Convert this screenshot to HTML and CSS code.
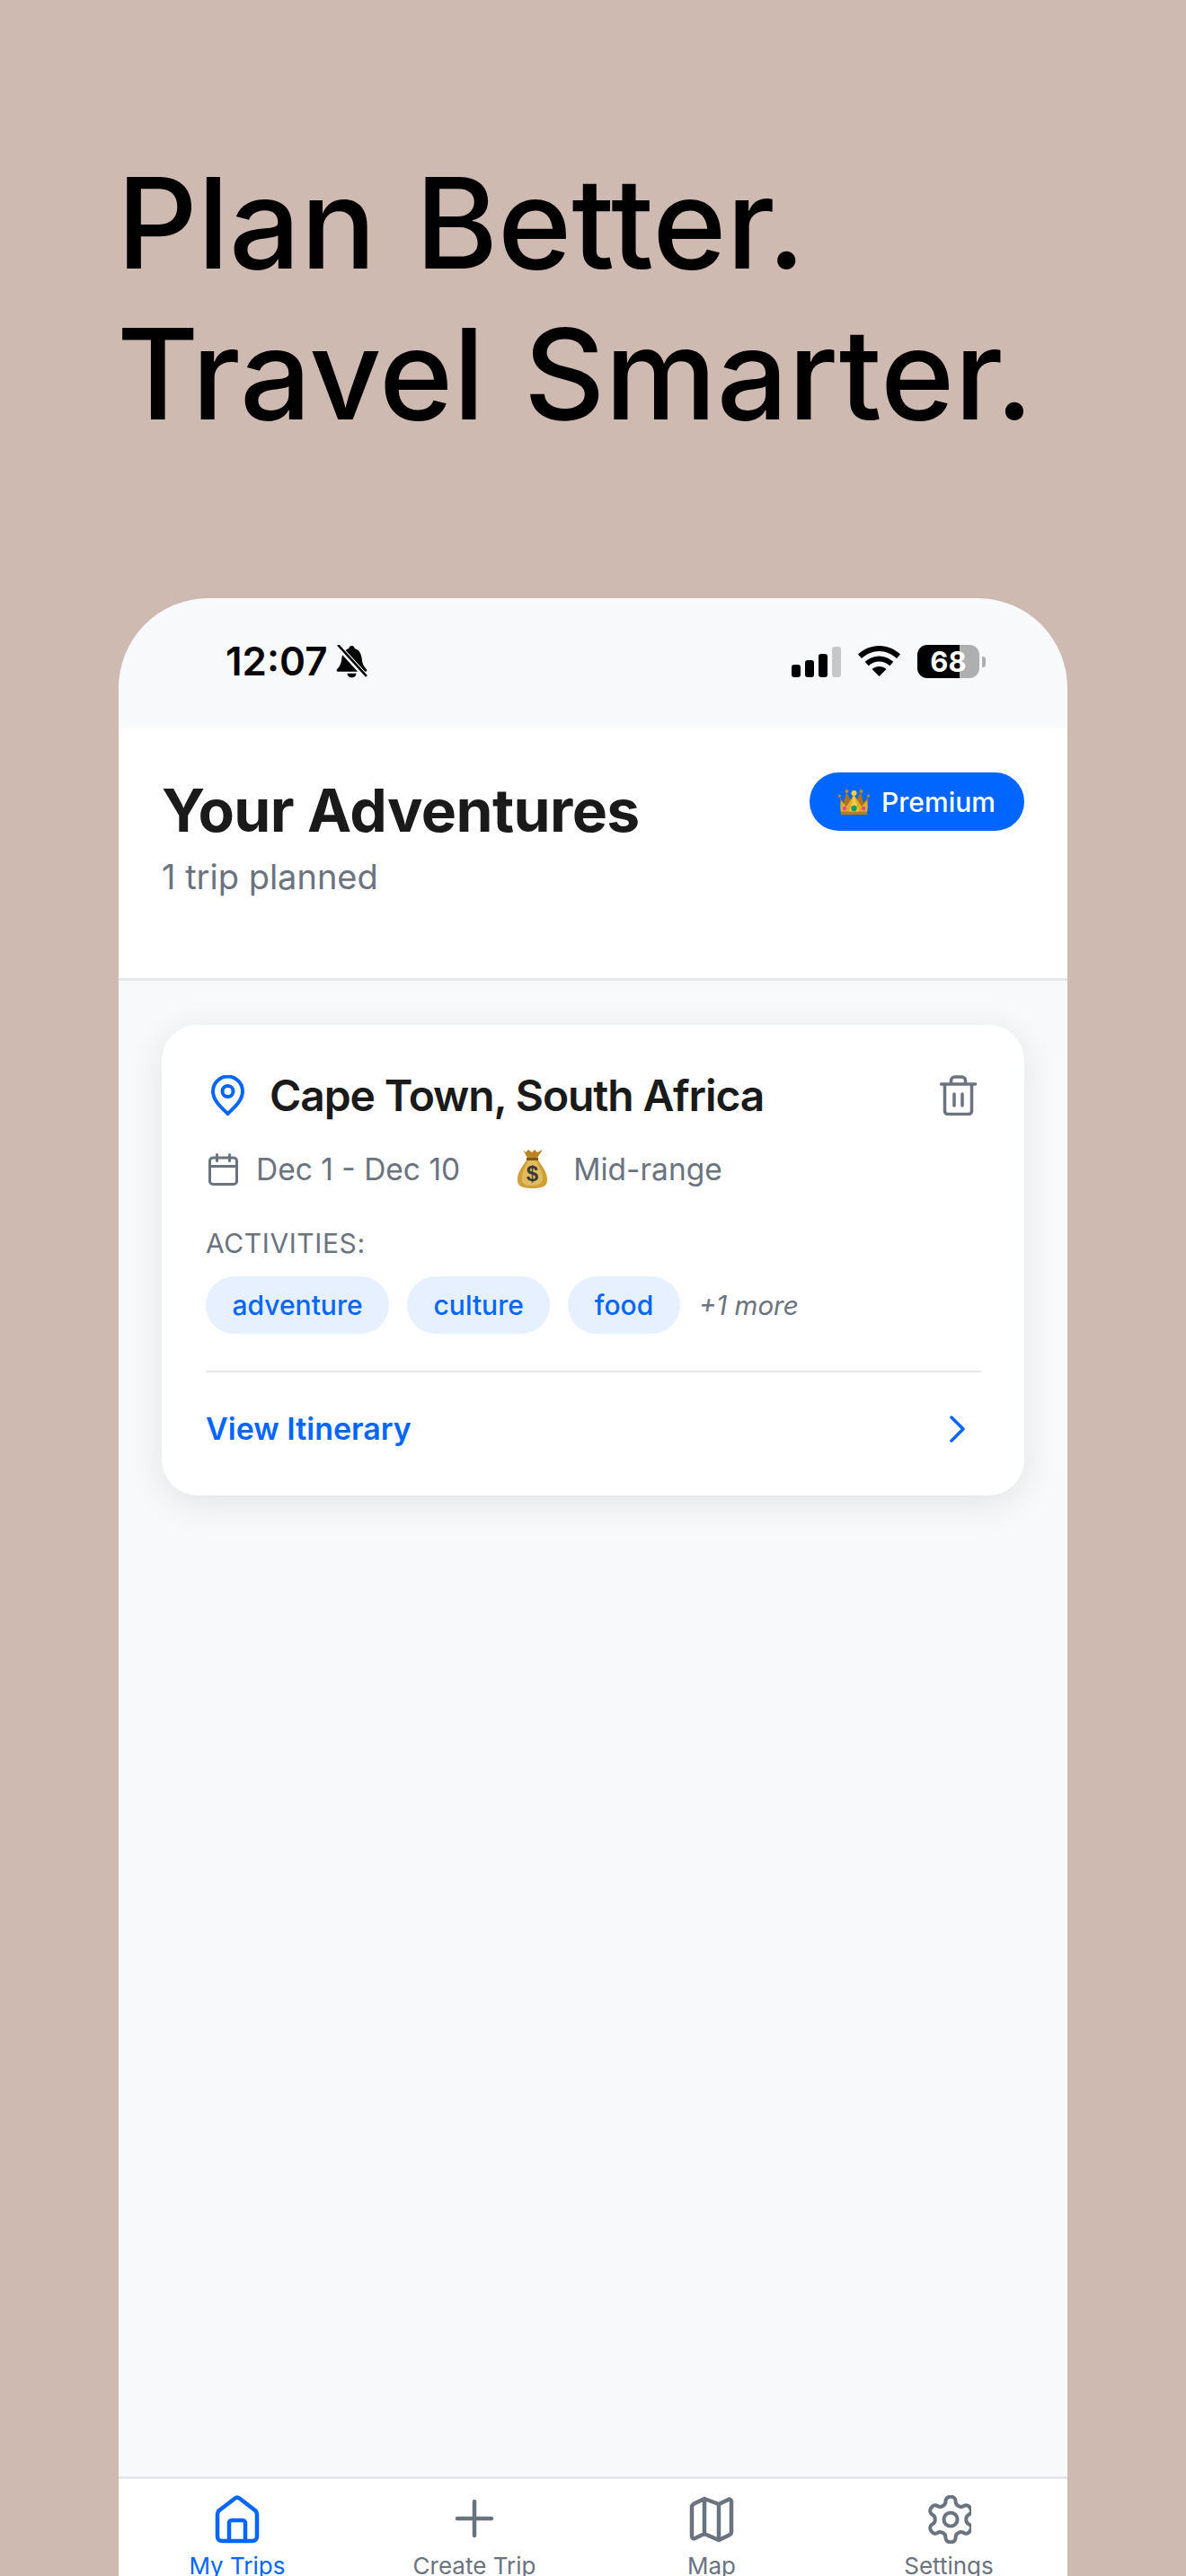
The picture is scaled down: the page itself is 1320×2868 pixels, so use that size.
FILE: index.html
```html
<!DOCTYPE html>
<html lang="en">

<head>
    <meta charset="UTF-8">
    <meta name="viewport" content="width=device-width, initial-scale=1.0">
    <title>Your Adventures</title>
    <link rel="stylesheet" href="styles.css">
</head>

<body>
    <h1 class="hero">Plan Better.<br>Travel Smarter.</h1>

    <div class="phone">
        <!-- Status Bar -->
        <div class="status-bar">
            <div class="status-left">
                <span class="clock">12:07</span>
                <svg class="bell" viewBox="0 0 36 36">
                    <path d="M18 1c-1.800 0-2.900 1.200-3.100 2.800C9.500 5.500 7.500 10 7 15.500c-.4 4.500-1.800 7.500-5 11-.9 1-.3 2.500 1 2.500h30c1.300 0 1.900-1.500 1-2.500-3.200-3.500-4.600-6.500-5-11-.5-5.500-2.500-10-7.900-11.700C20.900 2.200 19.800 1 18 1z" />
                    <path d="M13 31h10c-.4 2.800-2.400 4.500-5 4.500s-4.600-1.700-5-4.500z" />
                    <path class="bell-cut" d="M2 0l32 35" />
                    <path class="bell-slash" d="M3 0l31 34" />
                </svg>
            </div>
            <div class="status-right">
                <div class="signal">
                    <span class="bar bar-1"></span>
                    <span class="bar bar-2"></span>
                    <span class="bar bar-3"></span>
                    <span class="bar bar-4"></span>
                </div>
                <svg class="wifi" viewBox="0 0 47 34">
                    <path d="M23.500 0C14.500 0 6.500 3.500 0 9.500l4 4.500C9.500 9 16.300 6 23.500 6s14 3 19.500 8l4-4.500C40.500 3.500 32.500 0 23.500 0z" />
                    <path d="M23.500 11.500c-6 0-11.500 2.300-15.800 6.300l4 4.500c3.200-3 7.300-4.800 11.800-4.800s8.600 1.800 11.800 4.800l4-4.500C35 13.800 29.500 11.500 23.500 11.500z" />
                    <path d="M23.500 23c-3 0-5.800 1.100-8 3l8 8 8-8c-2.200-1.900-5-3-8-3z" />
                </svg>
                <div class="battery">
                    <div class="battery-body"><span>68</span></div>
                    <span class="battery-nub"></span>
                </div>
            </div>
        </div>

        <!-- Header -->
        <div class="header">
            <div>
                <h2 class="page-title">Your Adventures</h2>
                <p class="page-sub">1 trip planned</p>
            </div>
            <button class="premium-btn">
                <svg class="crown" viewBox="0 0 35 29">
                    <path fill="#a9741a" d="M1 8l5 19h23l5-19-6 8-3-12-5 9-3-9-3 9-5-9-3 12z" />
                    <path fill="#e2ac2b" d="M3 27c-1-6-1-10 0-14l6 7 8.500-13 8.500 13 6-7c1 4 1 8 0 14z" />
                    <path fill="#f5cf45" d="M12 27l5.500-20 5.500 20z" />
                    <circle cx="17.500" cy="5" r="3" fill="#f4cf3e" />
                    <circle cx="9.500" cy="3" r="2" fill="#c08a20" />
                    <circle cx="25.500" cy="3" r="2" fill="#c08a20" />
                    <circle cx="1.500" cy="8" r="1.500" fill="#c08a20" />
                    <circle cx="33.500" cy="8" r="1.500" fill="#c08a20" />
                    <circle cx="17.500" cy="22" r="3.200" fill="#12996b" />
                    <circle cx="7" cy="22" r="2.200" fill="#d84a9a" />
                    <circle cx="28" cy="22" r="2.200" fill="#d84a9a" />
                    <path fill="#b47f1c" d="M3 25.500h29V29H3z" />
                </svg>
                Premium
            </button>
        </div>

        <!-- Trip List -->
        <div class="content">
            <div class="trip-card">
                <div class="trip-top">
                    <svg class="pin-icon" viewBox="0 0 37 45">
                        <path d="M18.500 43C13 37.500 2 29 2 18a16.500 16.500 0 0 1 33 0c0 11-11 19.500-16.500 25z" />
                        <circle cx="18.500" cy="18" r="6" />
                    </svg>
                    <h3 class="trip-name">Cape Town, South Africa</h3>
                    <svg class="trash-icon" viewBox="0 0 41 45">
                        <path d="M1.500 10h38M5.500 10v30a3.500 3.500 0 0 0 3.500 3.500h23a3.500 3.500 0 0 0 3.500-3.500V10M12.500 10V6a4 4 0 0 1 4-4h8a4 4 0 0 1 4 4v4M16 21v13M25 21v13" />
                    </svg>
                </div>

                <div class="trip-meta">
                    <svg class="calendar-icon" viewBox="0 0 33 36">
                        <rect x="1.500" y="5" width="30" height="29.500" rx="3.500" />
                        <path d="M1.500 14.500h30M9.500 1.500v7M23.500 1.500v7" />
                    </svg>
                    <span class="dates">Dec 1 - Dec 10</span>
                    <svg class="bag" viewBox="0 0 35 45">
                        <path fill="#cf9f3a" d="M12 11C8 18 0 26 1 36c.5 6 6 8 16.500 8S33.500 42 34 36c1-10-7-18-11-25z" />
                        <path fill="#e2bb5c" d="M13 13C10 20 5 27 6 35c.5 4 5 6 11 6 7 0 12-3 12-8 0-8-5-14-7-20z" />
                        <path fill="#b98527" d="M7 1l5 9h11l6-9-6 3-3-3-3 3-4-3-3 3z" />
                        <path fill="#7f5a18" d="M11 10h13v3H11z" />
                        <text x="17.500" y="36" class="bag-dollar">$</text>
                    </svg>
                    <span class="budget">Mid-range</span>
                </div>

                <div class="activities-label">ACTIVITIES:</div>
                <div class="tags">
                    <span class="tag">adventure</span>
                    <span class="tag">culture</span>
                    <span class="tag">food</span>
                    <span class="more">+1 more</span>
                </div>

                <div class="card-footer">
                    <span class="view-link">View Itinerary</span>
                    <svg class="chevron" viewBox="0 0 20 30">
                        <path d="M3 2l13 13L3 28" />
                    </svg>
                </div>
            </div>
        </div>

        <!-- Tab Bar -->
        <div class="tab-bar">
            <div class="tab active">
                <svg viewBox="0 0 50 54">
                    <path d="M22.500 3.500a4 4 0 0 1 5 0L45 17a6 6 0 0 1 2 5v24a5 5 0 0 1-5 5H8a5 5 0 0 1-5-5V22a6 6 0 0 1 2-5z" />
                    <path d="M16 51V31a3 3 0 0 1 3-3h12a3 3 0 0 1 3 3v20" />
                </svg>
                <span>My Trips</span>
            </div>
            <div class="tab">
                <svg viewBox="0 0 50 54">
                    <path d="M25 7v38M6 26h38" />
                </svg>
                <span>Create Trip</span>
            </div>
            <div class="tab">
                <svg viewBox="0 0 50 54">
                    <path d="M3 13v33c0 2 2 3 3.500 2L17 43l16 7 10.500-5c1.500-.7 3.500-2 3.500-3.500V7c0-2-2-3-3.500-2L33 10 17 4 6.500 9C4.500 10 3 11 3 13zM17 4v39M33 10v40" />
                </svg>
                <span>Map</span>
            </div>
            <div class="tab">
                <svg viewBox="1.500 1.300 19.400 21.400">
                    <path class="thin" d="M12.220 2h-.440a2 2 0 0 0-2 2v.180a2 2 0 0 1-1 1.730l-.430.250a2 2 0 0 1-2 0l-.150-.080a2 2 0 0 0-2.730.730l-.220.380a2 2 0 0 0 .730 2.730l.150.100a2 2 0 0 1 1 1.720v.510a2 2 0 0 1-1 1.740l-.150.090a2 2 0 0 0-.730 2.730l.220.380a2 2 0 0 0 2.730.730l.150-.080a2 2 0 0 1 2 0l.430.250a2 2 0 0 1 1 1.730V20a2 2 0 0 0 2 2h.440a2 2 0 0 0 2-2v-.180a2 2 0 0 1 1-1.730l.430-.250a2 2 0 0 1 2 0l.150.080a2 2 0 0 0 2.730-.730l.220-.390a2 2 0 0 0-.730-2.730l-.150-.080a2 2 0 0 1-1-1.740v-.500a2 2 0 0 1 1-1.740l.150-.090a2 2 0 0 0 .730-2.730l-.220-.380a2 2 0 0 0-2.730-.730l-.150.080a2 2 0 0 1-2 0l-.430-.250a2 2 0 0 1-1-1.730V4a2 2 0 0 0-2-2z" />
                    <circle class="thin" cx="12" cy="12" r="3" />
                </svg>
                <span>Settings</span>
            </div>
        </div>
    </div>
</body>

</html>
```

FILE: styles.css
```css
* {
    margin: 0;
    padding: 0;
    box-sizing: border-box;
}

html,
body {
    height: 2868px;
    overflow: hidden;
}

body {
    background-color: #cfbab1;
    font-family: Inter, "Liberation Sans", sans-serif;
    color: #1a1a1a;
}

.hero {
    font-family: Inter, sans-serif;
    font-weight: 500;
    font-size: 140px;
    line-height: 168px;
    word-spacing: 6px;
    color: #000;
    padding: 164px 0 0 130px;
    height: 666px;
}

/* Phone frame */
.phone {
    width: 1056px;
    height: 2240px;
    margin-left: 132px;
    background-color: #f8f9fb;
    border-radius: 100px 100px 0 0;
    overflow: hidden;
    display: flex;
    flex-direction: column;
}

.status-bar {
    height: 145px;
    padding: 52px 91px 0 119px;
    display: flex;
    justify-content: space-between;
    align-items: flex-start;
}

.status-left {
    display: flex;
    align-items: center;
    gap: 8px;
}

.clock {
    font-size: 44px;
    font-weight: 600;
    line-height: 37px;
    color: #000;
}

.bell {
    width: 37px;
    height: 37px;
}

.bell-cut {
    stroke: #f8f9fb;
    stroke-width: 6;
}

.bell-slash {
    stroke: #000;
    stroke-width: 2.500;
}

.status-right {
    display: flex;
    align-items: flex-start;
    gap: 19px;
}

.signal {
    display: flex;
    align-items: flex-end;
    gap: 5px;
    height: 35px;
    margin-top: 1px;
}

.bar {
    width: 10px;
    background-color: #000;
    border-radius: 3px;
}

.bar-1 {
    height: 14px;
}

.bar-2 {
    height: 19px;
}

.bar-3 {
    height: 26px;
}

.bar-4 {
    height: 34px;
    background-color: #c6c7c9;
}

.wifi {
    width: 47px;
    height: 34px;
    margin-top: 1px;
}

.battery {
    display: flex;
    align-items: center;
    gap: 3px;
}

.battery-body {
    width: 69px;
    height: 37px;
    border-radius: 11px;
    background: linear-gradient(to right, #000 68%, #aeafb1 68%);
    color: #fff;
    font-size: 31px;
    font-weight: 700;
    line-height: 37px;
    text-align: center;
}

.battery-nub {
    width: 4px;
    height: 12px;
    border-radius: 0 3px 3px 0;
    background-color: #aeafb1;
}

/* Header */
.header {
    background-color: #fff;
    height: 281px;
    padding: 49px 48px 0 48px;
    border-bottom: 3px solid #e5e7eb;
    display: flex;
    justify-content: space-between;
    align-items: flex-start;
}

.page-title {
    font-size: 66px;
    font-weight: 700;
    line-height: 80px;
    letter-spacing: -0.6px;
    margin-top: 2px;
}

.page-sub {
    font-size: 38px;
    line-height: 46px;
    color: #6b7280;
    margin-top: 11px;
}

.premium-btn {
    width: 239px;
    height: 65px;
    border: none;
    border-radius: 33px;
    background-color: #0066ff;
    color: #fff;
    font-family: inherit;
    font-size: 30px;
    font-weight: 500;
    display: flex;
    align-items: center;
    justify-content: center;
    gap: 13px;
}

.crown {
    width: 35px;
    height: 29px;
}

/* Trip card */
.content {
    flex: 1;
    padding: 49px 48px 0 48px;
}

.trip-card {
    height: 524px;
    background-color: #fff;
    border-radius: 40px;
    box-shadow: 0 8px 40px rgba(0, 0, 0, 0.09);
    padding: 56px 48px 0 49px;
}

.trip-top {
    display: flex;
    align-items: center;
    height: 45px;
}

.pin-icon {
    width: 37px;
    height: 45px;
    margin-left: 6px;
    fill: none;
    stroke: #0066ff;
    stroke-width: 4;
}

.trip-name {
    flex: 1;
    font-size: 48px;
    font-weight: 600;
    letter-spacing: -1.1px;
    margin-left: 28px;
}

.trash-icon {
    width: 41px;
    height: 45px;
    margin-right: 5px;
    fill: none;
    stroke: #6b7280;
    stroke-width: 3.500;
    stroke-linecap: round;
    stroke-linejoin: round;
}

.trip-meta {
    display: flex;
    align-items: center;
    height: 45px;
    margin-top: 37px;
    font-size: 33.500px;
    color: #6b7280;
}

.calendar-icon {
    width: 33px;
    height: 36px;
    margin-left: 3px;
    fill: none;
    stroke: #6b7280;
    stroke-width: 3;
    stroke-linecap: round;
}

.dates {
    margin-left: 20px;
}

.bag {
    width: 35px;
    height: 45px;
    margin-left: 63px;
}

.bag-dollar {
    font-family: "Liberation Sans", sans-serif;
    font-size: 24px;
    font-weight: 700;
    fill: #3a3a3a;
    text-anchor: middle;
}

.budget {
    margin-left: 28px;
}

.activities-label {
    font-size: 30px;
    line-height: 36px;
    letter-spacing: 0.6px;
    color: #6b7280;
    margin-top: 42px;
}

.tags {
    display: flex;
    align-items: center;
    gap: 20px;
    margin-top: 19px;
}

.tag {
    height: 64px;
    padding: 0 29.500px;
    border-radius: 32px;
    background-color: #e6f0ff;
    color: #0066ff;
    font-size: 30px;
    font-weight: 500;
    line-height: 64px;
}

.more {
    font-size: 29.500px;
    font-style: italic;
    color: #6b7280;
    margin-left: 1px;
}

.card-footer {
    display: flex;
    align-items: center;
    justify-content: space-between;
    margin-top: 41px;
    padding: 42px 16px 0 0;
    border-top: 2px solid #e5e7eb;
}

.view-link {
    font-size: 34px;
    font-weight: 600;
    color: #0066ff;
}

.chevron {
    width: 20px;
    height: 30px;
    fill: none;
    stroke: #0066ff;
    stroke-width: 3.500;
    stroke-linecap: round;
    stroke-linejoin: round;
}

/* Tab bar */
.tab-bar {
    height: 149px;
    flex-shrink: 0;
    background-color: #fff;
    border-top: 3px solid #e5e7eb;
    display: grid;
    grid-template-columns: repeat(4, 1fr);
    padding-top: 18px;
}

.tab {
    display: flex;
    flex-direction: column;
    align-items: center;
    color: #6b7280;
    font-size: 26px;
    gap: 9px;
}

.tab svg {
    width: 50px;
    height: 54px;
    flex-shrink: 0;
    fill: none;
    stroke: currentColor;
    stroke-width: 4.500;
    stroke-linecap: round;
    stroke-linejoin: round;
}

.tab .thin {
    stroke-width: 1.600;
}

.tab.active {
    color: #0066ff;
}
```
